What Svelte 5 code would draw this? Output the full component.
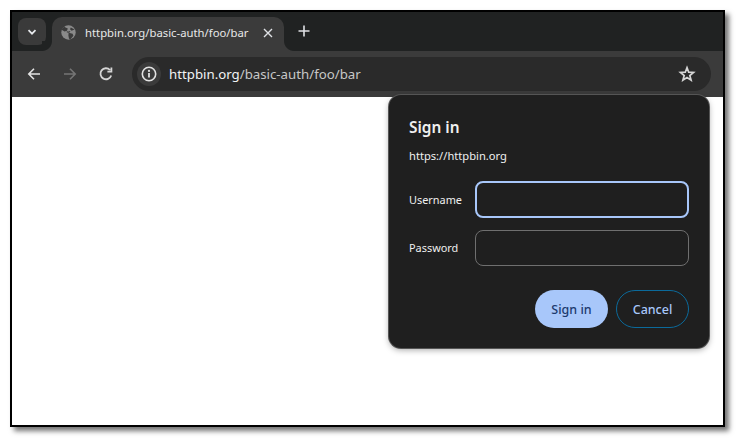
<script>
  let url = "httpbin.org/basic-auth/foo/bar";
</script>

<div class="page">
  <div class="window">
    <!-- tab strip -->
    <div class="tabstrip">
      <div class="tabsearch">
        <svg width="12" height="12" viewBox="0 0 12 12"><path d="M2.5 4.2 6 7.7l3.5-3.5" fill="none" stroke="#e8eaed" stroke-width="1.7"/></svg>
      </div>
      <div class="tab">
        <svg class="globe" width="15" height="15" viewBox="0 0 15 15">
          <circle cx="7.500" cy="7.500" r="7.200" fill="#8a8a8a"/>
          <path d="M3 1.800 6.800 3.400 6 5.800 3.600 6.600.6 4.800ZM13.600 4.600 9.800 2.400 9 4.200l1.600 1.600ZM7.600 7.800l4 1 .8 2-2.800 3.400-1.600-.4-.6-3.400Z" fill="#3b3b3b"/>
          <path d="M5.800 6.600C7 7.600 8 7.400 9 6.400" fill="none" stroke="#3b3b3b" stroke-width="1.200"/>
        </svg>
        <span class="tabtitle">{url}</span>
        <svg class="close" width="10" height="10" viewBox="0 0 10 10"><path d="M1 1l8 8M9 1 1 9" stroke="#dfe1e5" stroke-width="1.4"/></svg>
      </div>
      <svg class="plus" width="12" height="12" viewBox="0 0 12 12"><path d="M6 .5v11M.5 6h11" stroke="#dfe1e5" stroke-width="1.6"/></svg>
    </div>

    <!-- toolbar -->
    <div class="toolbar">
      <svg class="nav" width="16" height="16" viewBox="0 0 16 16"><path d="M14 8H3M8 2.800 2.800 8 8 13.200" fill="none" stroke="#e3e3e3" stroke-width="1.6"/></svg>
      <svg class="nav" width="16" height="16" viewBox="0 0 16 16"><path d="M2 8h11M8 2.800 13.200 8 8 13.200" fill="none" stroke="#757575" stroke-width="1.6"/></svg>
      <svg class="nav" width="16" height="16" viewBox="0 0 16 16"><path d="M13.200 9.400A5.500 5.500 0 1 1 12 4M13.400 1.600v4h-4" fill="none" stroke="#d6d6d6" stroke-width="1.8"/></svg>
      <div class="omnibox">
        <div class="chip">
          <svg width="16" height="16" viewBox="0 0 16 16">
            <circle cx="8" cy="8" r="6.700" fill="none" stroke="#e3e3e3" stroke-width="1.6"/>
            <path d="M8 7v4.400" stroke="#e3e3e3" stroke-width="1.8"/>
            <circle cx="8" cy="4.900" r="1.100" fill="#e3e3e3"/>
          </svg>
        </div>
        <div class="url"><span class="host">httpbin.org</span>/basic-auth/foo/bar</div>
        <svg class="star" width="18" height="18" viewBox="0 0 18 18"><path d="M9 2.600 10.700 7.200l4.800.3-3.700 3 1.300 4.700L9 12.600l-4.100 2.600 1.300-4.700-3.700-3 4.800-.3Z" fill="none" stroke="#d6d6d6" stroke-width="1.7"/></svg>
      </div>
    </div>

    <div class="content"></div>

    <!-- auth dialog sits over the page -->
    <div class="dialog">
      <h2>Sign in</h2>
      <p class="origin">https://httpbin.org</p>
      <div class="form">
        <label for="user">Username</label>
        <div class="input focused" id="user"></div>
        <label for="pass">Password</label>
        <div class="input" id="pass"></div>
      </div>
      <div class="actions">
        <div class="btn primary">Sign in</div>
        <div class="btn">Cancel</div>
      </div>
    </div>
  </div>
</div>

<style>
  :global(body) {
    margin: 0;
    background: #fff;
  }

  .page {
    width: 736px;
    height: 438px;
    padding: 10px 0 0 10px;
    box-sizing: border-box;
    font-family: "Noto Sans", "Open Sans", sans-serif;
  }

  .window {
    position: relative;
    width: 715px;
    height: 417px;
    box-sizing: border-box;
    border: 2px solid #000;
    display: flex;
    flex-direction: column;
    background: #fff;
    box-shadow: 4px 4px 5px rgba(0, 0, 0, 0.55);
  }

  .tabstrip {
    height: 39px;
    flex: none;
    background: #202222;
    display: flex;
    align-items: flex-end;
    padding-left: 6px;
  }

  .tabsearch {
    width: 28px;
    height: 27px;
    margin-bottom: 6px;
    border-radius: 8px;
    background: #3a3a3a;
    display: flex;
    align-items: center;
    justify-content: center;
  }

  .tab {
    position: relative;
    width: 232px;
    height: 34px;
    margin-left: 6px;
    box-sizing: border-box;
    padding: 0 11px 3px 9px;
    background: #3b3b3b;
    border-radius: 10px 10px 0 0;
    display: flex;
    align-items: center;
    color: #e8e8e8;
    font-size: 11.300px;
  }

  .tab::before,
  .tab::after {
    content: "";
    position: absolute;
    bottom: 0;
    width: 10px;
    height: 10px;
  }

  .tab::before {
    left: -10px;
    background: radial-gradient(circle at 0 0, #202222 9.5px, #3b3b3b 10.5px);
  }

  .tab::after {
    right: -10px;
    background: radial-gradient(circle at 100% 0, #202222 9.5px, #3b3b3b 10.5px);
  }

  .globe {
    flex: none;
  }

  .tabtitle {
    margin-left: 9px;
    flex: 1;
    white-space: nowrap;
  }

  .plus {
    margin: 0 0 14px 14px;
  }

  .toolbar {
    height: 46px;
    flex: none;
    background: #3b3b3b;
    display: flex;
    align-items: center;
    padding: 0 12px 0 14px;
    box-sizing: border-box;
    gap: 20px;
  }

  .nav {
    flex: none;
  }

  .omnibox {
    height: 34px;
    flex: 1;
    margin-left: -2px;
    border-radius: 17px;
    background: #2a2a2a;
    display: flex;
    align-items: center;
    padding: 0 15px 0 5px;
    color: #c7c7c7;
    font-size: 13.250px;
  }

  .chip {
    width: 24px;
    height: 24px;
    border-radius: 50%;
    background: #3b3b3b;
    display: flex;
    align-items: center;
    justify-content: center;
    flex: none;
  }

  .url {
    flex: 1;
    margin-left: 8px;
    white-space: nowrap;
  }

  .host {
    color: #f1f3f4;
  }

  .content {
    flex: 1;
    background: #fff;
  }

  .dialog {
    position: absolute;
    left: 377px;
    top: 83px;
    width: 320px;
    height: 253px;
    box-sizing: border-box;
    padding: 23px 20px 0;
    background: #1f1f1f;
    border-radius: 12px;
    color: #f0f0f0;
    box-shadow: 0 0 0 1px #555, 0 2px 6px rgba(0, 0, 0, 0.35);
  }

  h2 {
    margin: 0;
    font-size: 15.400px;
    line-height: 20px;
    font-weight: 600;
  }

  .origin {
    margin: 9px 0 0;
    font-size: 11.150px;
    line-height: 18px;
  }

  .form {
    margin-top: 16px;
    display: grid;
    grid-template-columns: 66px 1fr;
    row-gap: 12px;
    align-items: center;
  }

  label {
    font-size: 10.900px;
  }

  label[for="pass"] {
    margin-top: -2px;
  }

  .input {
    height: 36px;
    box-sizing: border-box;
    border: 1px solid #6f6f6f;
    border-radius: 8px;
  }

  .input.focused {
    height: 37px;
    border: 2px solid #a8c7fa;
  }

  .actions {
    margin-top: 24px;
    display: flex;
    justify-content: flex-end;
    gap: 8px;
  }

  .btn {
    width: 73px;
    height: 38px;
    box-sizing: border-box;
    border: 1px solid #0b6a9b;
    border-radius: 19px;
    display: flex;
    align-items: center;
    justify-content: center;
    color: #a8c7fa;
    font-size: 12.500px;
    font-weight: 500;
  }

  .btn.primary {
    border: none;
    background: #a8c7fa;
    color: #1d3a6e;
  }
</style>
